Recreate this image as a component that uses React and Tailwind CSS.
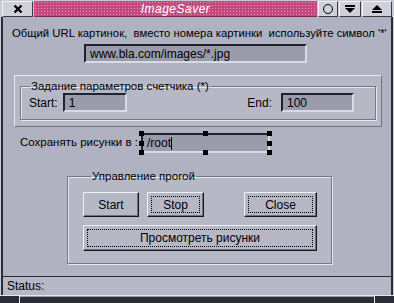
import React from "react";

const font = { fontFamily: '"Liberation Sans", Arial, sans-serif' };

function Field({ className, children }) {
    return (
        <div
            className={
                "flex shrink-0 items-center bg-[#9a9cab] border-2 border-t-[#22222c] border-l-[#22222c] border-b-[#d9dae4] border-r-[#d9dae4] px-1 text-[12px] text-black " +
                className
            }
        >
            {children}
        </div>
    );
}

function Btn({ className, focus, children }) {
    return (
        <div
            className={
                "flex shrink-0 p-[3px] bg-[#b6b8c6] border border-t-[#eef0f6] border-l-[#eef0f6] border-b-[#15151c] border-r-[#15151c] shadow-[inset_-1px_-1px_0_#6e7080] text-[12px] text-black " +
                className
            }
        >
            <div
                className={
                    "flex flex-1 items-center justify-center border border-dotted " +
                    (focus ? "border-black" : "border-transparent")
                }
            >
                {children}
            </div>
        </div>
    );
}

function Handle({ className }) {
    return <div className={"absolute w-[5px] h-[5px] bg-black " + className} />;
}

export default function App() {
    return (
        <div
            className="w-[394px] h-[303px] flex flex-col bg-[#c9cad4] overflow-hidden select-none"
            style={font}
        >
            {/* Title bar */}
            <div className="flex h-[17px] shrink-0 items-stretch gap-[1px] px-[2px] pt-[1px] bg-[#c9cad4]">
                <div className="w-[31px] flex items-center justify-center bg-[#cfd0da] border border-t-[#f2f2f6] border-l-[#f2f2f6] border-b-[#3a3a44] border-r-[#3a3a44]">
                    <svg width="10" height="10" viewBox="0 0 10 10">
                        <path d="M1.5 1.5 L8.5 8.5 M8.5 1.5 L1.5 8.5" stroke="#000" strokeWidth="2.4" />
                    </svg>
                </div>
                <div className="flex-1 flex items-center justify-center bg-[#c44a7e] bg-[radial-gradient(#e590b4_0.8px,transparent_0.9px)] bg-[length:3px_3px] border-b border-[#7a2d50]">
                    <span className="italic text-white text-[12px] tracking-[0.5px]">ImageSaver</span>
                </div>
                <div className="w-[20px] flex items-center justify-center bg-[#cfd0da] border border-t-[#f2f2f6] border-l-[#f2f2f6] border-b-[#3a3a44] border-r-[#3a3a44]">
                    <div className="w-[10px] h-[10px] rounded-full border border-black" />
                </div>
                <div className="w-[22px] flex items-center justify-center bg-[#cfd0da] border border-t-[#f2f2f6] border-l-[#f2f2f6] border-b-[#3a3a44] border-r-[#3a3a44]">
                    <svg width="12" height="10" viewBox="0 0 12 10">
                        <rect x="1" y="1" width="10" height="2" fill="#000" />
                        <path d="M1 4 H11 L6 9 Z" fill="#000" />
                    </svg>
                </div>
                <div className="w-[30px] flex items-center justify-center bg-[#cfd0da] border border-t-[#f2f2f6] border-l-[#f2f2f6] border-b-[#3a3a44] border-r-[#3a3a44]">
                    <svg width="12" height="10" viewBox="0 0 12 10">
                        <path d="M1 6 H11 L6 1 Z" fill="#000" />
                        <rect x="1" y="7" width="10" height="2" fill="#000" />
                    </svg>
                </div>
            </div>

            {/* Body */}
            <div className="flex-1 min-h-0 flex flex-col mx-[1px] border-l-2 border-r-2 border-[#2c2c36] bg-[#b0b2c2] bg-[radial-gradient(#000_0.6px,transparent_0.7px)] bg-[length:8px_8px] bg-[position:1px_3px] text-black">
                <div className="shrink-0 text-[11.3px] leading-[14px] mt-[9px] ml-[9px] whitespace-pre">
                    Общий URL картинок,  вместо номера картинки  используйте символ '*'
                </div>
                <Field className="mt-[4px] ml-[81px] w-[223px] h-[19px]">www.bla.com/images/*.jpg</Field>

                {/* Counter panel */}
                <div className="shrink-0 mt-[12px] ml-[11px] w-[368px] h-[52px] bg-[#b6b8c6] border border-t-[#e6e7ef] border-l-[#e6e7ef] border-b-[#70727f] border-r-[#70727f] px-[5px] pt-[3px]">
                    <fieldset className="h-[41px] border border-[#75778a] shadow-[1px_1px_0_#e6e7ef,inset_1px_1px_0_#e6e7ef] px-[8px]">
                        <legend className="text-[11.5px] leading-[14px] px-[1px] ml-[1px]">Задание параметров счетчика (*)</legend>
                        <div className="flex items-center">
                            <span className="text-[12px]">Start:</span>
                            <Field className="ml-[5px] w-[64px] h-[19px]">1</Field>
                            <span className="text-[12px] ml-auto">End:</span>
                            <Field className="ml-[9px] mr-[13px] w-[73px] h-[19px]">100</Field>
                        </div>
                    </fieldset>
                </div>

                {/* Save path */}
                <div className="shrink-0 flex items-center mt-[6px] ml-[17px]">
                    <span className="text-[11.5px]">Сохранять рисунки в :</span>
                    <div className="relative ml-[3px]">
                        <Field className="w-[129px] h-[20px] border-t-[#15151c] border-l-[#9a9cab]">
                            <span>/root</span>
                            <span className="w-[1px] h-[13px] bg-black" />
                        </Field>
                        <Handle className="-left-[2px] -top-[2px]" />
                        <Handle className="left-[62px] -top-[2px]" />
                        <Handle className="-right-[2px] -top-[2px]" />
                        <Handle className="-left-[2px] top-[8px]" />
                        <Handle className="-right-[2px] top-[8px]" />
                        <Handle className="-left-[2px] -bottom-[2px]" />
                        <Handle className="left-[62px] -bottom-[2px]" />
                        <Handle className="-right-[2px] -bottom-[2px]" />
                    </div>
                </div>

                {/* Control panel */}
                <fieldset className="shrink-0 mt-[16px] ml-[64px] w-[265px] h-[95px] bg-[#b6b8c6] border border-[#75778a] shadow-[1px_1px_0_#e6e7ef,inset_1px_1px_0_#e6e7ef] pl-[15px] pr-[14px]">
                    <legend className="text-[11.5px] leading-[14px] ml-[8px] px-[1px]">Управление прогой</legend>
                    <div className="flex mt-[9px]">
                        <Btn className="w-[56px] h-[25px]">Start</Btn>
                        <Btn className="ml-[8px] w-[57px] h-[25px]" focus>Stop</Btn>
                        <Btn className="ml-auto w-[73px] h-[25px]" focus>Close</Btn>
                    </div>
                    <Btn className="mt-[8px] h-[26px]" focus>Просмотреть рисунки</Btn>
                </fieldset>
            </div>

            {/* Status bar */}
            <div className="h-[19px] shrink-0 mx-[1px] border-t border-l-2 border-r-2 border-[#2c2c36] bg-[#b6b8c6] flex items-center px-[4px] text-[12px] text-black">
                Status:
            </div>
            <div className="h-[8px] shrink-0 flex bg-[#2c2c36] border-t border-[#e6e7ef]">
                <div className="w-[20px] border-r border-[#e6e7ef]" />
                <div className="flex-1 border-t border-[#9a9cab]" />
                <div className="w-[20px] border-l border-[#e6e7ef]" />
            </div>
        </div>
    );
}
